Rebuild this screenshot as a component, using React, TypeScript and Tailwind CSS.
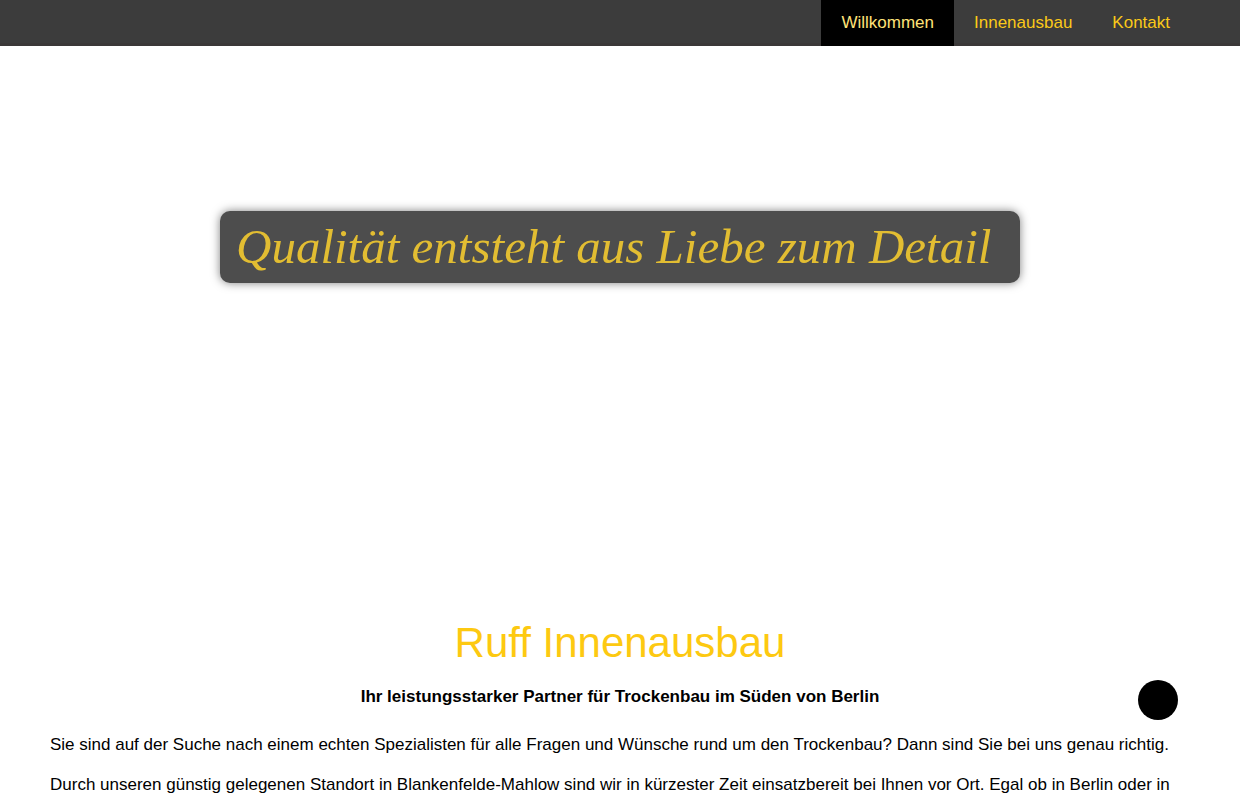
const navItems = [
  { label: "Willkommen", href: "#willkommen", active: true },
  { label: "Innenausbau", href: "#innenausbau", active: false },
  { label: "Kontakt", href: "#kontakt", active: false },
];

function Navbar() {
  return (
    <header className="bg-[#3c3c3c] px-[50px] shadow-[inset_0_-3px_0_#3b3838]">
      <nav className="flex justify-end">
        {navItems.map((item) => (
          <a
            key={item.href}
            href={item.href}
            aria-current={item.active ? "page" : undefined}
            className={`px-5 py-[11px] leading-6 ${
              item.active
                ? "bg-black text-[#ffe278]"
                : "text-[#fbc918] hover:bg-black hover:text-[#ffe278]"
            }`}
          >
            {item.label}
          </a>
        ))}
      </nav>
    </header>
  );
}

function Hero() {
  return (
    <section className="flex justify-center px-5 pt-[165px] pb-[330px]">
      <p className="w-full max-w-[800px] rounded-[10px] bg-[#4d4d4d] px-4 font-['Liberation_Serif',serif] text-[49px] leading-[72px] text-[#e2bd32] italic shadow-[0_0_10px_rgba(0,0,0,0.5)]">
        Qualität entsteht aus Liebe zum Detail
      </p>
    </section>
  );
}

export default function App() {
  return (
    <div className="min-h-screen bg-white font-['Liberation_Sans',Arial,sans-serif] text-[17px] leading-5 text-black">
      <Navbar />
      <Hero />

      <main id="willkommen" className="px-[50px]">
        <h1 className="text-center text-[42px] leading-[60px] text-[#fdc911]">
          Ruff Innenausbau
        </h1>
        <h2 className="mt-3.5 text-center font-bold">
          Ihr leistungsstarker Partner für Trockenbau im Süden von Berlin
        </h2>
        <div className="mt-7 space-y-5">
          <p>
            Sie sind auf der Suche nach einem echten Spezialisten für alle Fragen und Wünsche rund um
            den Trockenbau? Dann sind Sie bei uns genau richtig.
          </p>
          <p>
            Durch unseren günstig gelegenen Standort in Blankenfelde-Mahlow sind wir in kürzester
            Zeit einsatzbereit bei Ihnen vor Ort. Egal ob in Berlin oder in
          </p>
        </div>
      </main>

      <button
        type="button"
        aria-label="Nach oben"
        onClick={() => window.scrollTo({ top: 0, behavior: "smooth" })}
        className="fixed right-[62px] bottom-20 size-10 cursor-pointer rounded-full bg-black"
      />
    </div>
  );
}
